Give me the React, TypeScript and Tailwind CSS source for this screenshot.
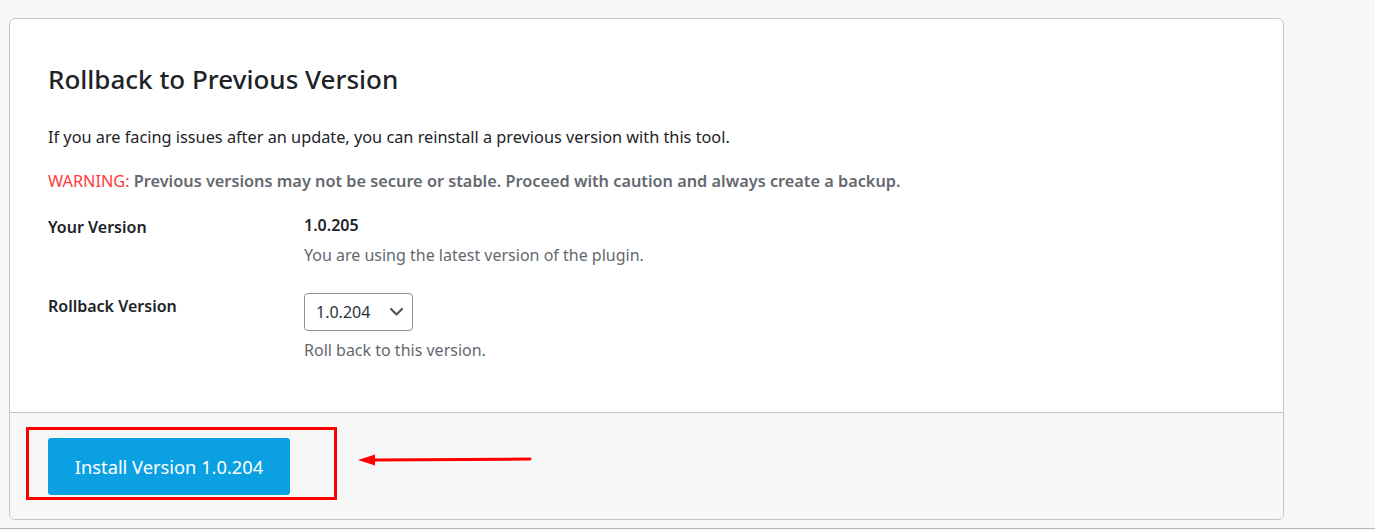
import React, { useState } from 'react';

const App: React.FC = () => {
  const [version, setVersion] = useState('1.0.204');

  return (
    <div className="min-h-[530px] bg-[#f6f7f7] pt-[18px] font-['Noto_Sans',sans-serif] text-[#1d2327]">
      <div className="ml-[9px] w-[1275px] rounded-[6px] border border-[#c3c4c7] bg-white overflow-hidden">
        {/* Body */}
        <div className="px-[38px] pt-[43px] pb-[51px]">
          <h2 className="text-[26px] font-medium leading-[34px] text-[#1d2327]">Rollback to Previous Version</h2>
          <p className="mt-[30px] text-[16.3px] leading-[22px] text-[#1d2327]">
            If you are facing issues after an update, you can reinstall a previous version with this tool.
          </p>
          <p className="mt-[22px] text-[16.3px] leading-[22px] font-semibold text-[#646970]">
            <span className="font-normal text-[#ff3b3b]">WARNING:</span> Previous versions may not be secure or stable.
            Proceed with caution and always create a backup.
          </p>

          <div className="mt-[22px] grid grid-cols-[256px_1fr] gap-y-[27px]">
            <div className="pt-[2px] text-[16px] font-semibold leading-[22px]">Your Version</div>
            <div>
              <div className="text-[16px] font-semibold leading-[22px]">1.0.205</div>
              <div className="mt-[8px] text-[16px] leading-[22px] text-[#646970]">You are using the latest version of the plugin.</div>
            </div>

            <div className="pt-[2px] text-[16px] font-semibold leading-[22px]">Rollback Version</div>
            <div>
              <div className="relative w-[109px]">
                <select
                  value={version}
                  onChange={e => setVersion(e.target.value)}
                  className="block h-[38px] w-[109px] appearance-none rounded-[4px] border border-[#8c8f94] bg-white pl-[11px] pr-[30px] text-[16px] text-[#2c3338] outline-none"
                >
                  <option>1.0.204</option>
                  <option>1.0.203</option>
                  <option>1.0.202</option>
                </select>
                <svg
                  className="pointer-events-none absolute right-[9px] top-[14px]"
                  width="15"
                  height="10"
                  viewBox="0 0 15 10"
                  fill="none"
                >
                  <path d="M2 2l5.5 5.5L13 2" stroke="#50575e" strokeWidth="2.2" strokeLinecap="round" strokeLinejoin="round" />
                </svg>
              </div>
              <div className="mt-[8px] text-[16px] leading-[22px] text-[#646970]">Roll back to this version.</div>
            </div>
          </div>
        </div>

        {/* Footer */}
        <div className="flex items-center gap-[21px] border-t border-[#c3c4c7] bg-[#f6f7f7] pl-[16px] pt-[14px] pb-[19px]">
          <div className="border-[3px] border-[#ff0000] pl-[19px] pr-[44px] pt-[8px] pb-[2px]">
            <button className="block h-[57px] w-[242px] rounded-[3px] bg-[#0aa0e2] text-[18.3px] text-white">
              Install Version {version}
            </button>
          </div>
          <svg width="175" height="14" viewBox="0 0 175 14" className="-mt-[7px]">
            <line x1="14" y1="7" x2="172" y2="6" stroke="#ff0000" strokeWidth="3" strokeLinecap="round" />
            <polygon points="0,7 17,1.5 17,12.5" fill="#ff0000" />
          </svg>
        </div>
      </div>
      <div className="mt-[8px] h-px bg-[#b4b9be]" />
    </div>
  );
};

export default App;
